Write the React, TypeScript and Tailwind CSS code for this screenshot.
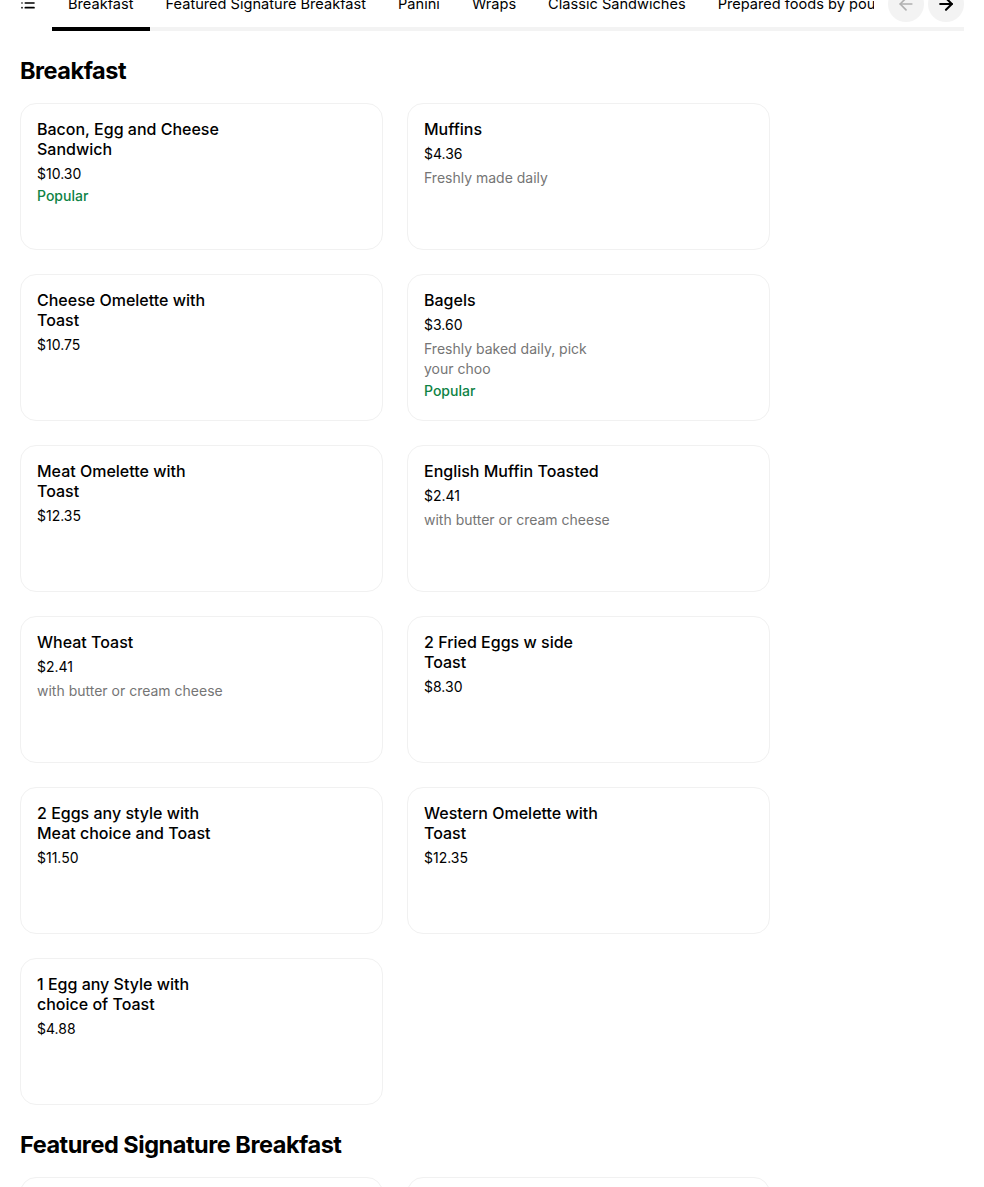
import React from "react";
import { ArrowLeft, ArrowRight, List } from "lucide-react";

type Item = {
  name: string;
  price: string;
  description?: string;
  popular?: boolean;
};

const tabs = [
  "Breakfast",
  "Featured Signature Breakfast",
  "Panini",
  "Wraps",
  "Classic Sandwiches",
  "Prepared foods by pound",
  "Salads",
];

const breakfast: Item[] = [
  { name: "Bacon, Egg and Cheese Sandwich", price: "$10.30", popular: true },
  { name: "Muffins", price: "$4.36", description: "Freshly made daily" },
  { name: "Cheese Omelette with Toast", price: "$10.75" },
  {
    name: "Bagels",
    price: "$3.60",
    description: "Freshly baked daily, pick your choo",
    popular: true,
  },
  { name: "Meat Omelette with Toast", price: "$12.35" },
  { name: "English Muffin Toasted", price: "$2.41", description: "with butter or cream cheese" },
  { name: "Wheat Toast", price: "$2.41", description: "with butter or cream cheese" },
  { name: "2 Fried Eggs w side Toast", price: "$8.30" },
  { name: "2 Eggs any style with Meat choice and Toast", price: "$11.50" },
  { name: "Western Omelette with Toast", price: "$12.35" },
  { name: "1 Egg any Style with choice of Toast", price: "$4.88" },
];

const featured: Item[] = [
  { name: "Signature Breakfast Sandwich", price: "$12.95" },
  { name: "Avocado Toast", price: "$11.25" },
];

function ItemCard({ item }: { item: Item }) {
  return (
    <div className="h-[147px] rounded-2xl border border-[#f1f1f1] bg-white px-4 pt-[15px] pb-4">
      <div className="max-w-[186px]">
        <div className="text-base leading-5 font-medium text-black">{item.name}</div>
        <div className="mt-[5px] text-sm leading-5 text-black">{item.price}</div>
        {item.description && (
          <div className="mt-1 text-sm leading-5 text-[#757575]">{item.description}</div>
        )}
        {item.popular && (
          <div className="mt-0.5 text-sm leading-5 font-medium text-[#0e8345]">Popular</div>
        )}
      </div>
    </div>
  );
}

function Section({ title, items }: { title: string; items: Item[] }) {
  return (
    <section className="mt-6">
      <h2 className="text-[23.5px] leading-8 font-bold tracking-[-0.02em] text-black">{title}</h2>
      <div className="mt-4 grid grid-cols-[repeat(2,363px)] gap-6">
        {items.map((item) => (
          <ItemCard key={item.name} item={item} />
        ))}
      </div>
    </section>
  );
}

export default function App() {
  return (
    <div
      className="min-h-screen overflow-hidden bg-white px-5 text-black"
      style={{ fontFamily: "Inter, 'Noto Sans', sans-serif" }}
    >
      <nav className="-mt-[18px] flex items-start gap-4">
        <List className="mt-[13px] h-4 w-4 shrink-0" strokeWidth={2.5} />
        <div className="relative flex-1">
          {/* grey track under the tabs */}
          <div className="absolute right-0 bottom-0 left-0 h-1 bg-[#f3f3f3]" />
          <div className="relative flex w-[822px] overflow-hidden whitespace-nowrap">
            {tabs.map((tab, i) => (
              <div
                key={tab}
                className={
                  "shrink-0 border-b-4 px-4 pt-3 pb-[13px] text-[14.6px] leading-5 " +
                  (i === 0 ? "border-black" : "border-transparent")
                }
              >
                {tab}
              </div>
            ))}
          </div>
          <div className="absolute top-[4px] right-0 flex gap-1">
            <button className="flex h-9 w-9 items-center justify-center rounded-full bg-[#f3f3f3] text-[#b0b0b0]">
              <ArrowLeft className="h-5 w-5" />
            </button>
            <button className="flex h-9 w-9 items-center justify-center rounded-full bg-[#f3f3f3] text-black">
              <ArrowRight className="h-5 w-5" strokeWidth={2.5} />
            </button>
          </div>
        </div>
      </nav>

      <Section title="Breakfast" items={breakfast} />
      <Section title="Featured Signature Breakfast" items={featured} />
    </div>
  );
}
